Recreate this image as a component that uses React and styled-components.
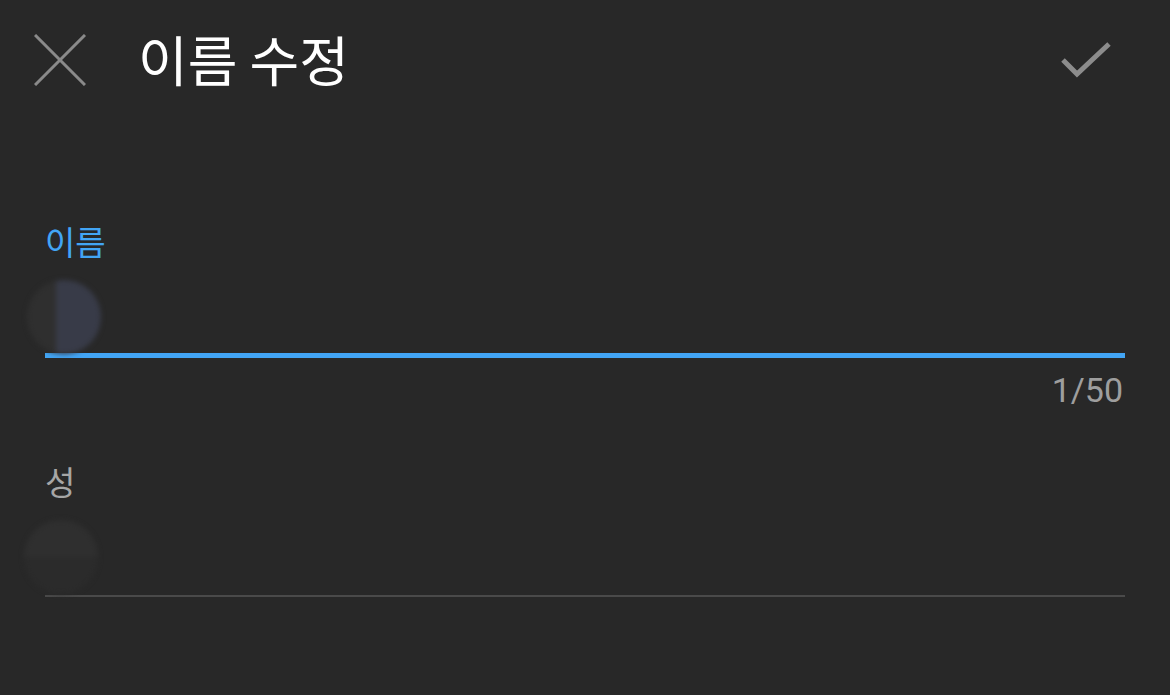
import React from "react";
import styled, { createGlobalStyle } from "styled-components";

const GlobalStyle = createGlobalStyle`
  html, body {
    margin: 0;
    padding: 0;
    background: #282828;
  }
`;

function App() {
  return (
    <Page>
      <GlobalStyle />
      <Toolbar>
        <IconButton aria-label="close">
          <svg width="52" height="52" viewBox="0 0 52 52">
            <path d="M1 1 L51 51 M51 1 L1 51" stroke="#8a8a8a" strokeWidth="3" fill="none" />
          </svg>
        </IconButton>
        <Title>이름 수정</Title>
        <CheckButton aria-label="save">
          <svg width="52" height="40" viewBox="0 0 52 40">
            <path d="M3 19 L17 33 L49 3" stroke="#8c8c8c" strokeWidth="5" fill="none" />
          </svg>
        </CheckButton>
      </Toolbar>
      <Form>
        <Field>
          <Label $active>이름</Label>
          <InputBox $active>
            <Ripple $active $left={-18} $top={18} />
          </InputBox>
          <Counter>1/50</Counter>
        </Field>
        <Field>
          <Label>성</Label>
          <InputBox>
            <Ripple $left={-21} $top={18} />
          </InputBox>
        </Field>
      </Form>
    </Page>
  );
}

export default App;

const Page = styled.div`
  width: 1170px;
  height: 695px;
  background: #282828;
  font-family: Roboto, "Noto Sans CJK KR", sans-serif;
  overflow: hidden;
`;

const Toolbar = styled.div`
  height: 120px;
  display: flex;
  align-items: center;
  padding: 0 0 0 34px;
`;

const IconButton = styled.div`
  width: 52px;
  height: 52px;
  display: flex;
`;

const Title = styled.div`
  margin-left: 52px;
  flex: 1;
  color: #ffffff;
  font-family: "Noto Sans CJK KR", sans-serif;
  font-size: 54px;
  line-height: 1;
  padding-bottom: 2px;
`;

const CheckButton = styled.div`
  width: 52px;
  height: 40px;
  margin-right: 58px;
  margin-top: 2px;
  display: flex;
`;

const Form = styled.div`
  padding: 100px 45px 0;
  display: flex;
  flex-direction: column;
`;

const Field = styled.div`
  display: flex;
  flex-direction: column;
  margin-bottom: 60px;
`;

const Label = styled.div`
  color: ${(p) => (p.$active ? "#42a5f5" : "#a6a6a6")};
  font-family: "Noto Sans CJK KR", sans-serif;
  font-size: 33px;
  line-height: 42px;
`;

const InputBox = styled.div`
  position: relative;
  height: ${(p) => (p.$active ? "91px" : "93px")};
  border-bottom: ${(p) => (p.$active ? "5px solid #42a5f5" : "2px solid #4a4a4a")};
`;

const Ripple = styled.div`
  position: absolute;
  left: ${(p) => p.$left}px;
  top: ${(p) => p.$top}px;
  width: 74px;
  height: 74px;
  border-radius: 50%;
  filter: blur(2.5px);
  background: ${(p) =>
    p.$active
      ? "linear-gradient(to right, #2f2f2f 0 29px, #383b48 29px 100%)"
      : "linear-gradient(to bottom, #2f2f2f 0 50%, #2b2b2b 50% 100%)"};
`;

const Counter = styled.div`
  align-self: flex-end;
  margin-right: 2px;
  margin-top: 12px;
  color: #9e9e9e;
  font-size: 34px;
  line-height: 40px;
  margin-bottom: -10px;
`;
